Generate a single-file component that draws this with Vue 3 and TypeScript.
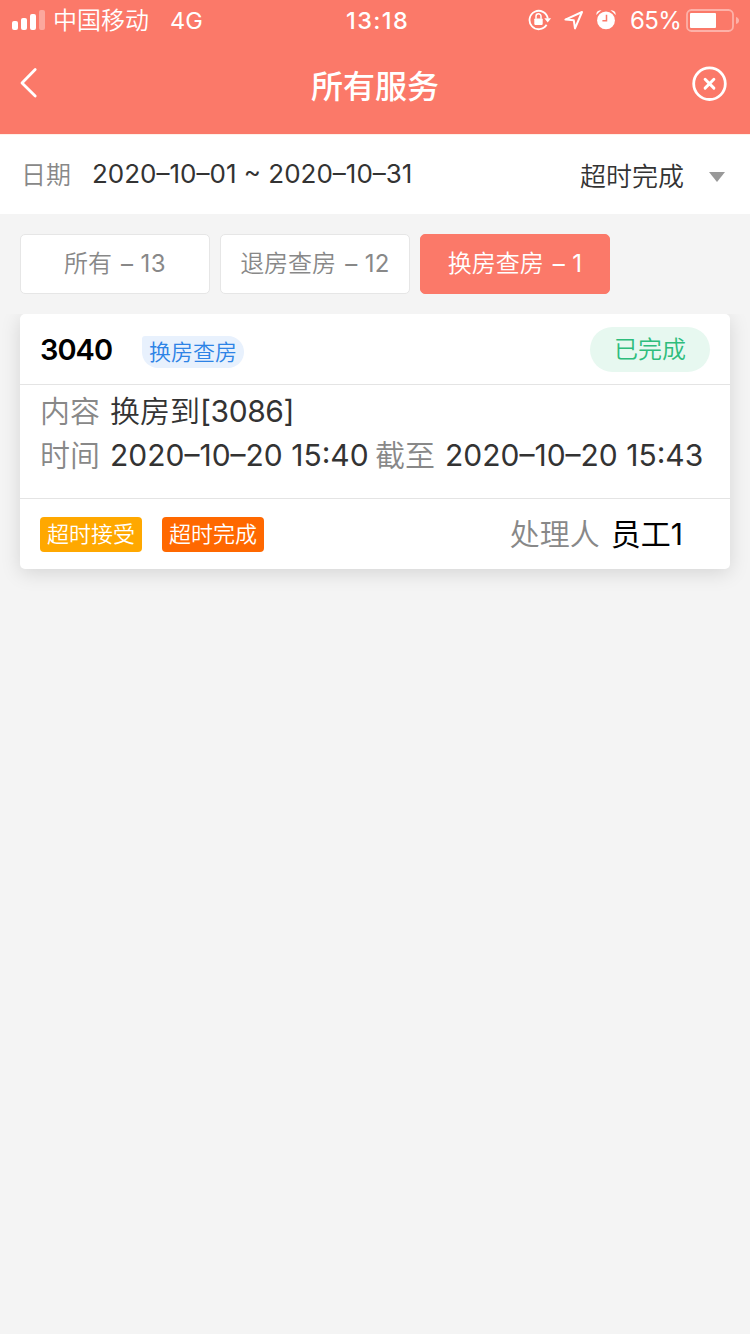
<script setup lang="ts">
import { ref } from 'vue'

interface Tab {
  name: string
  count: number
}

const tabs: Tab[] = [
  { name: '所有', count: 13 },
  { name: '退房查房', count: 12 },
  { name: '换房查房', count: 1 },
]
const active = ref(2)

const order = {
  room: '3040',
  type: '换房查房',
  status: '已完成',
  content: '换房到',
  target: '[3086]',
  start: '2020–10–20 15:40',
  end: '2020–10–20 15:43',
  handler: '员工',
  handlerNo: '1',
}
</script>

<template>
  <div class="page">
    <header class="top">
      <div class="status-bar">
        <svg class="signal" width="34" height="22" viewBox="0 0 34 22">
          <g fill="#fff">
            <rect x="0" y="12" width="6" height="9" rx="2" />
            <rect x="9" y="9" width="6" height="12" rx="2" />
            <rect x="18" y="5" width="6" height="16" rx="2" />
            <rect x="27" y="1" width="6" height="20" rx="2" opacity=".35" />
          </g>
        </svg>
        <span class="carrier">中国移动</span>
        <span class="network">4G</span>
        <span class="clock">13:18</span>
        <div class="indicators">
          <svg class="lock" width="24" height="22" viewBox="0 0 24 22">
            <path d="M18.600 15.800A9.200 9.200 0 1 1 19.800 9.500" fill="none" stroke="#fff" stroke-width="1.8" />
            <path d="M16.300 9.200h6.800l-3.400 4.400z" fill="#fff" />
            <rect x="6.300" y="9.500" width="8.400" height="6.400" rx=".8" fill="#fff" />
            <path d="M8 9.700V7.300a2.500 2.500 0 0 1 5 0v2.400" fill="none" stroke="#fff" stroke-width="1.500" />
          </svg>
          <svg class="location" width="20" height="20" viewBox="0 0 20 20">
            <path d="M1.400 9.600 18 2 11 18.400 9.800 10.300z" fill="none" stroke="#fff" stroke-width="2" stroke-linejoin="round" />
          </svg>
          <svg class="alarm" width="20" height="21" viewBox="0 0 20 21">
            <circle cx="10" cy="11.400" r="8.900" fill="#fff" />
            <path d="M.4 6Q-.2 1.200 5.600 1.200L3 3.200zM19.600 6Q20.200 1.200 14.400 1.200L17 3.200z" fill="#fff" />
            <path d="M10.500 5.800v6H6.400" fill="none" stroke="#fb7969" stroke-width="1.5" />
          </svg>
          <span class="percent">65%</span>
          <svg class="battery" width="54" height="24" viewBox="0 0 54 24">
            <rect x="1" y="1" width="46" height="21" rx="4.500" fill="none" stroke="#fff" stroke-width="1.800" opacity=".42" />
            <rect x="4" y="4" width="26" height="15" rx="1" fill="#fff" />
            <path d="M50 8q3 1 3 3.500t-3 3.500z" fill="#fff" opacity=".42" />
          </svg>
        </div>
      </div>
      <nav class="nav">
        <svg class="back" width="20" height="34" viewBox="0 0 20 34">
          <path d="M16.200 3.500 3 17l13.200 13" fill="none" stroke="#fff" stroke-width="2.800" stroke-linecap="round" stroke-linejoin="round" />
        </svg>
        <h1 class="title">所有服务</h1>
        <svg class="close" width="36" height="36" viewBox="0 0 36 36">
          <circle cx="18.500" cy="17.700" r="15.800" fill="none" stroke="#fff" stroke-width="2.800" />
          <path d="m14.100 13.300 8.800 8.800m0-8.800-8.800 8.800" stroke="#fff" stroke-width="2.900" stroke-linecap="round" />
        </svg>
      </nav>
    </header>

    <section class="filters">
      <span class="date-label">日期</span>
      <span class="date-range">2020–10–01 ~ 2020–10–31</span>
      <span class="state">超时完成</span>
      <i class="caret"></i>
    </section>

    <div class="tabs">
      <button
        v-for="(tab, i) in tabs"
        :key="tab.name"
        class="tab"
        :class="{ on: i === active }"
        @click="active = i"
      >
        <span>{{ tab.name }}</span><span class="tab-count">– {{ tab.count }}</span>
      </button>
    </div>

    <main class="list">
      <article class="card">
        <div class="card-head">
          <strong class="room">{{ order.room }}</strong>
          <span class="type">{{ order.type }}</span>
          <span class="status">{{ order.status }}</span>
        </div>
        <div class="card-body">
          <div class="row">
            <span class="label">内容</span><span class="value">{{ order.content }}<span class="target">{{ order.target }}</span></span>
          </div>
          <div class="row">
            <span class="label">时间</span><span class="value time">{{ order.start }}</span>
            <span class="label until">截至</span><span class="value time">{{ order.end }}</span>
          </div>
        </div>
        <div class="card-foot">
          <span class="tag amber">超时接受</span>
          <span class="tag orange">超时完成</span>
          <span class="label handler">处理人</span>
          <span class="name">{{ order.handler }}<span class="num">{{ order.handlerNo }}</span></span>
        </div>
      </article>
    </main>
  </div>
</template>

<style>
body {
  margin: 0;
  background: #f4f4f4;
}
</style>

<style scoped>
.page {
  width: 750px;
  min-height: 1334px;
  background: #f4f4f4;
  font-family: Inter, "Noto Sans CJK SC", sans-serif;
  font-weight: 350;
  color: #333;
  white-space: nowrap;
}
.top {
  height: 134px;
  background: #fb7969;
  color: #fff;
}
.status-bar {
  display: grid;
  grid-template-columns: 41px 117px 176px 1fr auto;
  height: 40px;
  padding: 0 10px 0 12px;
  line-height: 41px;
  font-size: 24px;
}
.carrier {
  line-height: 42px;
}
.signal {
  margin-top: 9px;
}
.network {
  font-size: 23.5px;
  font-weight: 400;
}
.clock {
  font-size: 23.5px;
  font-weight: 500;
  letter-spacing: 1.4px;
}
.indicators {
  display: flex;
}
.lock {
  margin: 9px 12px 0 0;
}
.location {
  margin: 10px 12px 0 0;
}
.alarm {
  margin: 9px 14px 0 0;
}
.percent {
  width: 56px;
  font-weight: 400;
  letter-spacing: -0.6px;
}
.battery {
  margin-top: 9px;
}
.nav {
  display: grid;
  grid-template-columns: 120px 1fr 120px;
  height: 94px;
}
.back {
  margin: 26px 0 0 19px;
}
.title {
  margin: 0;
  text-align: center;
  font-size: 32px;
  font-weight: 500;
  line-height: 94px;
}
.close {
  margin: 26px 0 0 61px;
}
.filters {
  display: flex;
  box-sizing: border-box;
  height: 80px;
  padding: 0 25px 0 21px;
  border-top: 1px solid #fff0e8;
  background: #fff;
  font-size: 26px;
  line-height: 80px;
}
.date-label {
  width: 71px;
  color: #888;
  font-size: 25px;
}
.date-range {
  font-size: 26px;
  font-weight: 400;
  line-height: 78px;
}
.state {
  margin: 2px 0 0 auto;
}
.caret {
  width: 0;
  height: 0;
  margin: 37px 0 0 25px;
  border: 8px solid transparent;
  border-top: 10px solid #999;
  border-bottom: 0;
}
.tabs {
  display: flex;
  gap: 10px;
  padding: 20px 20px 0;
  height: 80px;
}
.tab {
  display: flex;
  justify-content: center;
  gap: 9px;
  box-sizing: border-box;
  width: 190px;
  height: 60px;
  padding: 0;
  border: 1px solid #e6e6e6;
  border-radius: 5px;
  background: #fff;
  color: #888;
  font: inherit;
  font-size: 24px;
  line-height: 58px;
}
.tab.on {
  border-color: #fb7969;
  background: #fb7969;
  color: #fff;
}
.tab-count {
  font-size: 24px;
  font-weight: 400;
  letter-spacing: 0.4px;
}
.list {
  overflow: hidden;
  padding: 0 20px 50px;
}
.card {
  height: 255px;
  border-radius: 5px;
  background: #fff;
  box-shadow: 0 4px 20px rgba(0, 0, 0, 0.13);
}
.card-head {
  display: flex;
  box-sizing: border-box;
  height: 71px;
  padding: 0 20px;
  border-bottom: 1px solid #e4e4e4;
}
.room {
  width: 102px;
  color: #000;
  font-size: 29px;
  font-weight: 600;
  letter-spacing: -1px;
  line-height: 71px;
}
.type {
  width: 102px;
  height: 32px;
  margin-top: 22px;
  border-radius: 3px 16px 16px 16px;
  background: #e8f1fd;
  color: #2d83e6;
  font-size: 22px;
  line-height: 32px;
  text-align: center;
}
.status {
  width: 120px;
  height: 45px;
  margin: 13px 0 0 auto;
  border-radius: 23px;
  background: #e7f8f0;
  color: #2ebd7c;
  font-size: 24px;
  line-height: 45px;
  text-align: center;
}
.card-body {
  box-sizing: border-box;
  height: 114px;
  padding: 4px 20px 0;
  border-bottom: 1px solid #e4e4e4;
  font-size: 30px;
}
.row {
  display: flex;
  height: 44px;
  line-height: 44px;
}
.label {
  width: 70px;
  color: #888;
}
.target {
  font-weight: 400;
  letter-spacing: -0.4px;
}
.time {
  width: 258px;
  font-size: 30px;
  font-weight: 400;
}
.until {
  margin-left: 7px;
}
.card-foot {
  display: flex;
  height: 70px;
  padding: 0 47px 0 20px;
  font-size: 30px;
  line-height: 70px;
}
.tag {
  width: 102px;
  height: 35px;
  margin: 18px 20px 0 0;
  border-radius: 4px;
  color: #fff;
  font-size: 22px;
  line-height: 34px;
  text-align: center;
}
.amber {
  background: #ffa800;
}
.orange {
  background: #ff6800;
}
.handler {
  width: 101px;
  margin-left: auto;
}
.name {
  color: #000;
  font-weight: 400;
}
</style>
